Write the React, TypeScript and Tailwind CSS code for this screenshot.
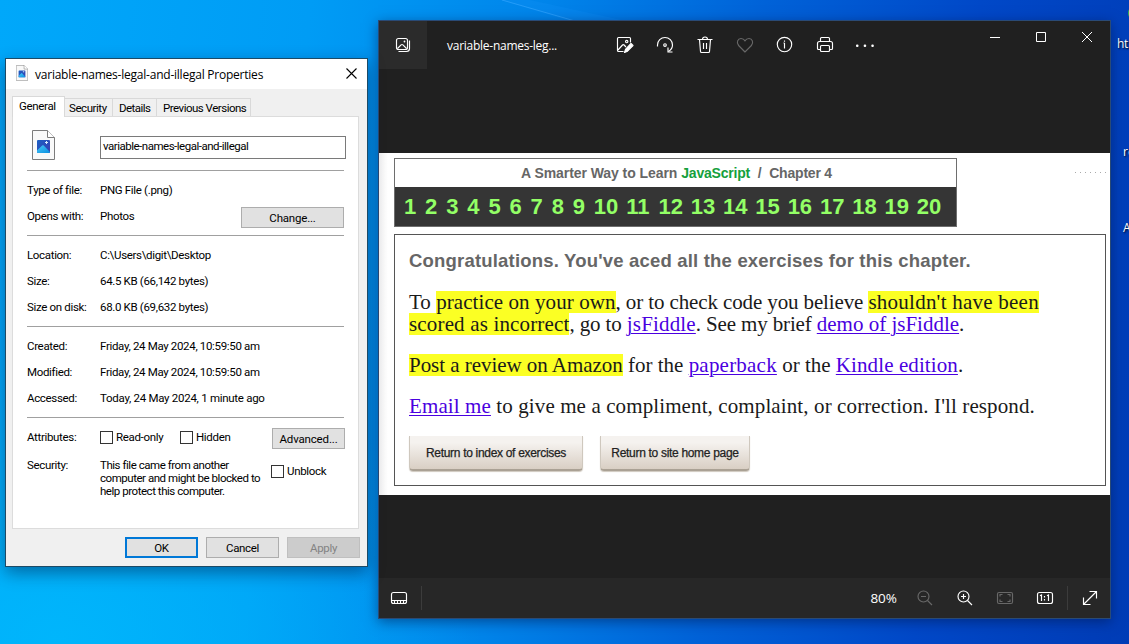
import React, { type ReactNode } from "react";

const rowClass = "flex h-[26px] items-center";

function Rule() {
  return <hr className="my-[6px] h-px w-[317px] border-0 bg-[#a0a0a0]" />;
}

function Row({ label, children }: { label: string; children: ReactNode }) {
  return (
    <div className={rowClass}>
      <span className="w-[73px] shrink-0">{label}</span>
      {children}
    </div>
  );
}

function Check({ label }: { label: string }) {
  return (
    <label className="flex items-center gap-[3px]">
      <span className="size-[13px] border border-[#333] bg-white" />
      <span className="pt-px">{label}</span>
    </label>
  );
}

function PhotoFile({ className }: { className: string }) {
  return (
    <svg className={className} viewBox="0 0 23 30" fill="none">
      <defs>
        <linearGradient id="photoSky" x1="0" y1="0" x2="1" y2="1">
          <stop offset="0" stopColor="#1b5fc4" />
          <stop offset="1" stopColor="#3a3fb0" />
        </linearGradient>
        <linearGradient id="photoHill" x1="0" y1="0" x2="1" y2="1">
          <stop offset="0" stopColor="#49c8f8" />
          <stop offset="1" stopColor="#0a8fe0" />
        </linearGradient>
      </defs>
      <path d="M.5.5h15l7 7v22H.5z" fill="#f9f9f9" stroke="#7c7c7c" />
      <path d="M15.5.5v7h7" fill="#fff" stroke="#7c7c7c" />
      <rect x="5" y="10" width="13" height="13" rx="1" fill="url(#photoSky)" />
      <path d="M5 20.500l5.200-5c.5-.5 1-.5 1.500 0L18 22q-.2 1-1 1H6q-1 0-1-1z" fill="url(#photoHill)" />
      <path d="M14.500 11v3M13 12.500h3" stroke="#d6ecff" />
    </svg>
  );
}

function PropertiesDialog() {
  const button = "flex h-[21px] items-center justify-center border border-[#adadad] bg-[#e1e1e1] pt-px";
  return (
    <section className="absolute left-[5px] top-[58px] flex h-[509px] w-[363px] flex-col border border-[#1c4a66] bg-[#f0f0f0] font-['Roboto',sans-serif] text-[11.5px] leading-[13px] tracking-[-0.33px] text-black shadow-[0_6px_16px_rgba(0,20,60,0.45)]">
      <header className="flex h-[30px] shrink-0 items-center bg-white pl-[10px] pr-[10px]">
        <PhotoFile className="mb-[2px] h-[16px] w-[12px]" />
        <h1 className="ml-[7px] flex-1 font-['Open_Sans',sans-serif] text-[12px] tracking-[-0.23px]">
          variable-names-legal-and-illegal Properties
        </h1>
        <svg className="mb-[2px] size-[11px]" viewBox="0 0 11 11" stroke="#000" strokeWidth="1.1">
          <path d="M.5.5l10 10M10.500.5l-10 10" />
        </svg>
      </header>

      <nav className="relative z-10 -mb-px ml-[6px] mt-[7px] flex h-[21px] shrink-0 items-end">
        <span className="h-[21px] w-[53px] border border-b-0 border-[#d9d9d9] bg-white pl-[6px] pt-[3px]">General</span>
        <span className="mb-px h-[18px] w-[48px] border-r border-t border-[#d9d9d9] pl-[4px] pt-[3px] tracking-[-0.44px]">Security</span>
        <span className="mb-px h-[18px] w-[44px] border-r border-t border-[#d9d9d9] pl-[6px] pt-[3px] tracking-[-0.55px]">Details</span>
        <span className="mb-px h-[18px] w-[94px] border-r border-t border-[#d9d9d9] pl-[6px] pt-[3px] tracking-[-0.5px]">Previous Versions</span>
      </nav>

      <div className="ml-[6px] flex h-[413px] w-[347px] shrink-0 flex-col border border-[#dcdcdc] bg-white pl-[14px]">
        <div className="flex h-[47px] shrink-0 items-start pl-[5px] pt-[13px]">
          <PhotoFile className="h-[30px] w-[23px]" />
          <div className="ml-[45px] mt-[6px] flex h-[23px] w-[246px] items-center border border-[#7a7a7a] pb-[2px] pl-[2px] tracking-[-0.49px]">
            variable-names-legal-and-illegal
          </div>
        </div>
        <Rule />
        <Row label="Type of file:">PNG File (.png)</Row>
        <Row label="Opens with:">
          <span className="flex-1">Photos</span>
          <span className={`${button} mr-[14px] mt-[3px] w-[103px] tracking-[-0.2px]`}>Change...</span>
        </Row>
        <Rule />
        <Row label="Location:">C:\Users\digit\Desktop</Row>
        <Row label="Size:">64.5 KB (66,142 bytes)</Row>
        <Row label="Size on disk:">68.0 KB (69,632 bytes)</Row>
        <Rule />
        <Row label="Created:">Friday, 24 May 2024, 10:59:50 am</Row>
        <Row label="Modified:">Friday, 24 May 2024, 10:59:50 am</Row>
        <Row label="Accessed:"><span className="tracking-[-0.28px]">Today, 24 May 2024, 1 minute ago</span></Row>
        <Rule />
        <Row label="Attributes:">
          <div className="w-[80px]"><Check label="Read-only" /></div>
          <div className="flex-1"><Check label="Hidden" /></div>
          <span className={`${button} mr-[13px] mt-[3px] w-[73px] tracking-[-0.16px]`}>Advanced...</span>
        </Row>
        <div className="mt-[9px] flex items-start">
          <span className="w-[73px]">Security:</span>
          <p className="w-[171px] tracking-[-0.46px]">
            This file came from another
            <br />
            computer and might be blocked to
            <br />
            help protect this computer.
          </p>
          <div className="mt-[5px]"><Check label="Unblock" /></div>
        </div>
      </div>

      <footer className="mr-[7px] mt-[8px] flex justify-end gap-[8px]">
        <span className="flex h-[21px] w-[73px] items-center justify-center border-2 border-[#0078d7] bg-[#e1e1e1] pt-px">OK</span>
        <span className={`${button} w-[73px]`}>Cancel</span>
        <span className="flex h-[21px] w-[73px] items-center justify-center border border-[#bfbfbf] bg-[#cccccc] pt-px text-[#838383]">Apply</span>
      </footer>
    </section>
  );
}

function Glyph({ children, dim }: { children: ReactNode; dim?: boolean }) {
  return (
    <span className="flex w-[40px] justify-center">
      <svg
        className={dim ? "size-[20px] text-[#686868]" : "size-[20px] text-white"}
        viewBox="0 0 20 20"
        fill="none"
        stroke="currentColor"
        strokeWidth="1.15"
      >
        {children}
      </svg>
    </span>
  );
}

function ViewerToolbar() {
  return (
    <header className="flex h-[48px] shrink-0 text-white">
      <div className="flex w-[48px] items-center justify-center bg-[#2b2b2b]">
        <Glyph>
          <rect x="3.500" y="3.500" width="11" height="11" rx="2" />
          <path d="M5.500 16.500h8q3 0 3-3v-8" />
          <path d="M4.500 13.500l3.600-3.600q.9-.8 1.800 0l3.600 3.600" />
          <circle cx="11.500" cy="6.500" r=".9" fill="currentColor" stroke="none" />
        </Glyph>
      </div>
      <span className="ml-[20px] mt-[18px] w-[158px] font-['Open_Sans',sans-serif] text-[12px] leading-[14px] tracking-[-0.26px]">
        variable-names-leg...
      </span>
      <div className="flex items-center">
        <Glyph>
          <path d="M8.500 16.500H3.500q-1 0-1-1V3.500q0-1 1-1h11q1 0 1 1v4" />
          <path d="M3 15l4.500-5q.8-.8 1.600 0l1.900 2" />
          <circle cx="11.700" cy="6.500" r="1.200" />
          <path d="M16 8.500l2 2-5.500 5.700-3 1.300 1-3.200z" fill="currentColor" strokeLinejoin="round" />
        </Glyph>
        <Glyph>
          <path d="M2.500 11.500V10a7.500 7.500 0 0 1 15 0q0 4-4 6.500" />
          <path d="M13 12.500v4.500h4.500" />
          <circle cx="10" cy="10" r="1.300" />
        </Glyph>
        <Glyph>
          <path d="M2.500 4.500h15M7.500 4.500q0-2.500 2.500-2.500t2.500 2.500M4.500 4.500l1 12q.1 1 1 1h7q.9 0 1-1l1-12M8.500 8v6M11.500 8v6" />
        </Glyph>
        <Glyph dim>
          <path d="M10 17L3.600 10.500C1 7.500 2.800 3.500 6 3.500c2 0 3.200 1 4 2.300.8-1.300 2-2.300 4-2.300 3.200 0 5 4 2.400 7z" />
        </Glyph>
        <Glyph>
          <circle cx="9.500" cy="9.500" r="7.200" />
          <path d="M9.500 8v5.500M8.500 8h1M9.500 5.500v1.200" />
        </Glyph>
        <Glyph>
          <path d="M5.500 14.500h-2q-1 0-1-1v-5q0-2 2-2h11q2 0 2 2v5q0 1-1 1h-2" />
          <path d="M5.500 6.500v-3q0-1 1-1h7q1 0 1 1v3" />
          <rect x="5.500" y="10.500" width="9" height="6" rx="1" />
        </Glyph>
        <Glyph>
          <g fill="currentColor" stroke="none">
            <rect x="1" y="9.500" width="2.500" height="2.500" rx="1" />
            <rect x="8.700" y="9.500" width="2.500" height="2.500" rx="1" />
            <rect x="16.300" y="9.500" width="2.500" height="2.500" rx="1" />
          </g>
        </Glyph>
      </div>
      <div className="ml-auto flex h-[32px] items-center gap-[36px] pr-[18px]">
        <svg className="size-[10px]" viewBox="0 0 10 10" stroke="#fff"><path d="M0 5.500h10" /></svg>
        <svg className="size-[10px]" viewBox="0 0 10 10" stroke="#fff" fill="none"><path d="M.5.5h9v9h-9z" /></svg>
        <svg className="size-[10px]" viewBox="0 0 10 10" stroke="#fff"><path d="M0 0l10 10M10 0L0 10" /></svg>
      </div>
    </header>
  );
}

const singles = [1, 2, 3, 4, 5, 6, 7, 8, 9];
const doubles = [10, 11, 12, 13, 14, 15, 16, 17, 18, 19, 20];

function Mark({ children, className = "" }: { children: ReactNode; className?: string }) {
  return <mark className={`inline-block h-[22px] bg-[#fbff24] text-[#1a1a1a] ${className}`}>{children}</mark>;
}

function Link({ children, className = "" }: { children: ReactNode; className?: string }) {
  return <a className={`text-[#4a00e0] underline decoration-1 underline-offset-2 ${className}`}>{children}</a>;
}

function PageButton({ children, className }: { children: ReactNode; className: string }) {
  return (
    <span
      className={`flex h-[35px] items-center justify-center rounded-b-[4px] border-x border-b-2 border-[#cfc8be] border-b-[#aaa194] bg-gradient-to-b from-[#f5f2ef] from-20% to-[#d9cfc4] pt-px font-['Liberation_Sans',Arial,sans-serif] text-[12px] leading-[14px] tracking-[-0.31px] text-[#222] shadow-[0_1px_1px_#cfc8be] [-webkit-text-stroke:0.25px_#222] ${className}`}
    >
      {children}
    </span>
  );
}

function Photo() {
  return (
    <main className="mt-[84px] flex h-[342px] shrink-0 flex-col bg-white bg-[linear-gradient(to_right,#f3f3f3,#fff_9px)] pl-[15px] pt-[5px]">
      <div className="flex items-start">
        <div className="h-[69px] w-[563px] border border-[#6e6e6e] bg-white font-['Liberation_Sans',Arial,sans-serif] font-bold">
          <p className="h-[28px] whitespace-pre pl-[2px] text-center text-[14px] leading-[28px] tracking-[-0.06px] text-[#666]">
            A Smarter Way to Learn <span className="tracking-[-0.2px] text-[#15a03c]">JavaScript</span>
            {"  /  "}
            <span className="tracking-[-0.2px]">Chapter 4</span>
          </p>
          <div className="flex h-[39px] bg-[#353535] pl-[9px] text-[22px] leading-[39px] text-[#93ff66]">
            {singles.map((n) => (
              <span key={n} className="w-[21.1px] shrink-0">{n}</span>
            ))}
            {doubles.map((n) => (
              <span key={n} className="w-[32.3px] shrink-0">{n}</span>
            ))}
          </div>
        </div>
        <div className="ml-auto mt-[14px] h-px w-[35px] bg-[repeating-linear-gradient(to_right,#aaa_0_1px,transparent_1px_5px)]" />
      </div>
      <article className="mt-[7px] h-[252px] w-[712px] border border-[#555] bg-white pl-[14px] font-['Liberation_Serif',Georgia,serif] text-[21px] leading-[22px] text-[#1a1a1a]">
        <h2 className="mt-[15px] font-['Liberation_Sans',Arial,sans-serif] text-[18.5px] font-bold leading-[22px] tracking-[0.19px] text-[#666]">
          Congratulations. You've aced all the exercises for this chapter.
        </h2>
        <p className="mt-[19px] whitespace-nowrap">
          To <Mark className="relative z-10 tracking-[0.08px]">practice on your own</Mark>
          <span className="tracking-[-0.12px]">, or to check code you believe </span>
          <Mark className="tracking-[0.24px]">shouldn't have been</Mark>
          <br />
          <Mark className="tracking-[0.16px]">scored as incorrect</Mark>
          <span className="tracking-[-0.12px]">, go to </span>
          <Link className="tracking-[0.16px]">jsFiddle</Link>
          <span className="tracking-[-0.14px]">. See my brief </span>
          <Link>demo of jsFiddle</Link>.
        </p>
        <p className="mt-[19px]">
          <Mark className="tracking-[-0.04px]">Post a review on Amazon</Mark> for the{" "}
          <Link className="tracking-[0.22px]">paperback</Link> or the{" "}
          <Link className="tracking-[0.1px]">Kindle edition</Link>.
        </p>
        <p className="mt-[19px] tracking-[0.11px]">
          <Link>Email me</Link> to give me a compliment, complaint, or correction. I'll respond.
        </p>
        <div className="mt-[19px] flex gap-[17px]">
          <PageButton className="w-[174px]">Return to index of exercises</PageButton>
          <PageButton className="w-[150px]">Return to site home page</PageButton>
        </div>
      </article>
    </main>
  );
}

function ViewerFooter() {
  return (
    <footer className="mt-auto flex h-[40px] shrink-0 items-center bg-[#272727] text-white">
      <Glyph>
        <rect x="2.500" y="4.500" width="15" height="11" rx="2" />
        <path d="M3 12.500h14M5.500 12.500v3M8.500 12.500v3M11.500 12.500v3M14.500 12.500v3" />
      </Glyph>
      <span className="ml-[2px] h-[24px] w-px bg-[#3c3c3c]" />
      <span className="ml-auto mr-[8px] font-['Open_Sans',sans-serif] text-[13.5px] leading-[16px]">80%</span>
      <Glyph dim>
        <circle cx="8.500" cy="8.500" r="5.500" />
        <path d="M12.500 12.500l4.500 4.500M6 8.500h5" />
      </Glyph>
      <Glyph>
        <circle cx="8.500" cy="8.500" r="5.500" />
        <path d="M12.500 12.500l4.500 4.500M6 8.500h5M8.500 6v5" />
      </Glyph>
      <Glyph dim>
        <rect x="2.500" y="4.500" width="15" height="11" rx="1.500" />
        <path d="M5 8.500v-2h2.500M12.500 6.500H15v2M15 11.500v2h-2.500M7.500 13.500H5v-2" />
      </Glyph>
      <Glyph>
        <rect x="2.500" y="4.500" width="15" height="11" rx="2" />
        <path d="M5 7.800l1.500-.8v6M12 7.800l1.500-.8v6M9.500 8v1.500M9.500 11v1.500" />
      </Glyph>
      <span className="ml-[2px] h-[24px] w-px bg-[#3c3c3c]" />
      <span className="ml-[2px]">
        <Glyph>
          <path d="M3.500 16.500l13-13M9.500 3.500h7v7M3.500 9.500v7h7" />
        </Glyph>
      </span>
    </footer>
  );
}

const label =
  "absolute font-['Open_Sans',sans-serif] text-[12px] leading-[14px] text-white [text-shadow:1px_1px_2px_#000]";

export default function App() {
  return (
    <div className="relative h-[644px] w-[1129px] overflow-hidden bg-[radial-gradient(ellipse_420px_300px_at_60px_640px,rgba(0,186,252,0.8),rgba(0,186,252,0)),linear-gradient(96deg,#00a8fa_0%,#009cf5_26%,#0084ea_46%,#0062d8_64%,#0048c8_82%,#003cb6_100%)]">
      <svg className="absolute left-0 top-0 h-[24px] w-[640px]" viewBox="0 0 640 24">
        <path d="M500 0L580 24H640L530 0z" fill="#1f9cff" opacity=".15" />
        <path d="M502 0L575 21" stroke="#38a8ff" opacity=".6" />
      </svg>
      <span className={`${label} left-[1117px] top-[37px] tracking-[-0.4px]`}>ht</span>
      <span className={`${label} left-[1123px] top-[145px]`}>re</span>
      <span className={`${label} left-[1123px] top-[221px]`}>A</span>
      <span className="absolute left-[1128px] top-[6px] size-[14px] rounded-full bg-[#35b34a]" />

      <section className="absolute left-[378px] top-[20px] flex h-[599px] w-[733px] flex-col border border-[#2a4a75] bg-[#202020] shadow-[0_3px_12px_rgba(0,20,70,0.5)]">
        <ViewerToolbar />
        <Photo />
        <ViewerFooter />
      </section>
      <PropertiesDialog />
    </div>
  );
}
